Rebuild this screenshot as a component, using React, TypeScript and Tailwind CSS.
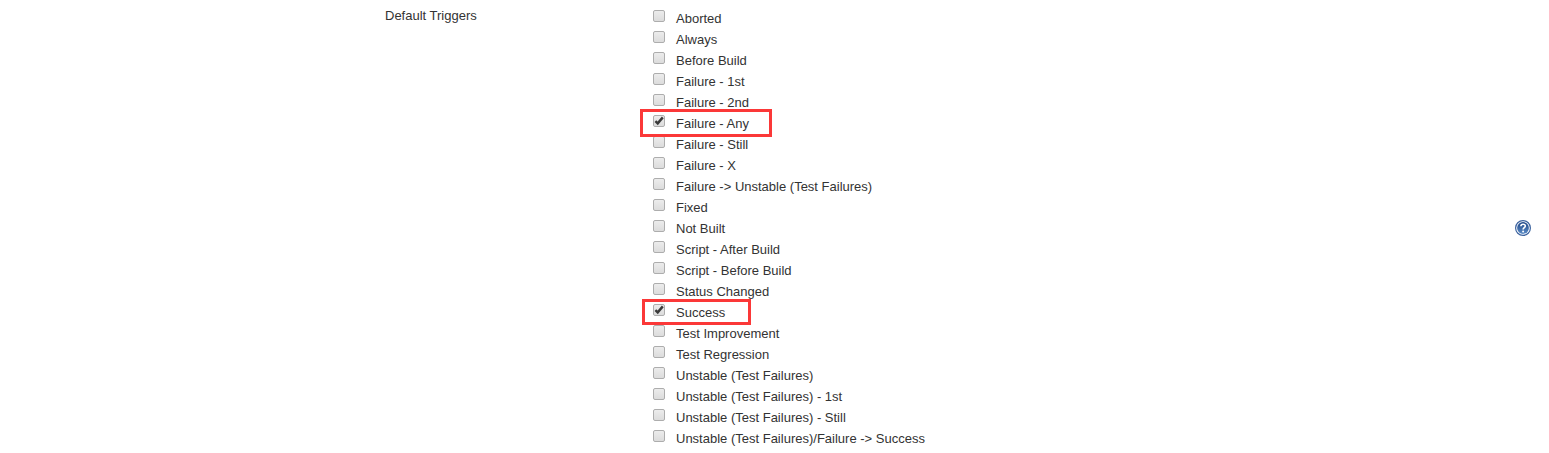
import React, { useState } from "react";

type Trigger = { name: string; checked?: boolean; highlight?: string };

const triggers: Trigger[] = [
  { name: "Aborted" },
  { name: "Always" },
  { name: "Before Build" },
  { name: "Failure - 1st" },
  { name: "Failure - 2nd" },
  { name: "Failure - Any", checked: true, highlight: "-left-[13px] -top-1 h-7 w-[132px]" },
  { name: "Failure - Still" },
  { name: "Failure - X" },
  { name: "Failure -> Unstable (Test Failures)" },
  { name: "Fixed" },
  { name: "Not Built" },
  { name: "Script - After Build" },
  { name: "Script - Before Build" },
  { name: "Status Changed" },
  { name: "Success", checked: true, highlight: "-left-[11px] -top-[3px] h-[26px] w-[109px]" },
  { name: "Test Improvement" },
  { name: "Test Regression" },
  { name: "Unstable (Test Failures)" },
  { name: "Unstable (Test Failures) - 1st" },
  { name: "Unstable (Test Failures) - Still" },
  { name: "Unstable (Test Failures)/Failure -> Success" },
];

function TriggerOption({ trigger }: { trigger: Trigger }) {
  const [checked, setChecked] = useState(Boolean(trigger.checked));
  return (
    <li className="relative flex h-[21px]">
      <label className="flex items-start gap-[11px]">
        <span className="mt-0.5 grid size-3">
          <input
            type="checkbox"
            checked={checked}
            onChange={(e) => setChecked(e.target.checked)}
            className="col-start-1 row-start-1 size-3 appearance-none rounded-xs border border-[#adadad] bg-linear-to-b from-[#ececec] to-[#dcdcdc]"
          />
          {checked && (
            <svg viewBox="0 0 12 12" className="pointer-events-none col-start-1 row-start-1 size-3" aria-hidden="true">
              <path d="M2.4 6.2 4.7 8.4 9.8 2.4" fill="none" stroke="#3a3a3a" strokeWidth="2.4" />
            </svg>
          )}
        </span>
        <span className="leading-[21px]">{trigger.name}</span>
      </label>
      {trigger.highlight && (
        <span className={"pointer-events-none absolute z-10 border-3 border-[#fb3838] " + trigger.highlight} />
      )}
    </li>
  );
}

function HelpIcon() {
  return (
    <svg viewBox="0 0 16 16" className="size-4" aria-hidden="true">
      <defs>
        <linearGradient id="help-fill" x1="0" y1="0" x2="0" y2="1">
          <stop offset="0" stopColor="#1f4788" />
          <stop offset="1" stopColor="#5b8cc6" />
        </linearGradient>
      </defs>
      <circle cx="8" cy="8" r="7.4" fill="#fff" stroke="#3c639f" strokeWidth="1.2" />
      <circle cx="8" cy="8" r="5.9" fill="url(#help-fill)" />
      <path d="M5.9 6.2C5.9 3.6 10.3 3.6 10.3 6.1 10.3 7.8 8.1 7.7 8.1 9.6" fill="none" stroke="#fff" strokeWidth="1.6" />
      <circle cx="8.1" cy="11.5" r="1" fill="#fff" />
    </svg>
  );
}

export default function App() {
  return (
    <main className="bg-white font-['Liberation_Sans',Arial,sans-serif] text-[13px] text-[#333333]">
      <fieldset aria-labelledby="triggers-title" className="flex pt-2 pr-[18px] pb-1 pl-[385px]">
        <div id="triggers-title" className="w-[268px] shrink-0 leading-4">
          Default Triggers
        </div>
        <ul className="flex-1">
          {triggers.map((t) => (
            <TriggerOption key={t.name} trigger={t} />
          ))}
        </ul>
        <button type="button" aria-label="Help for feature: Default Triggers" className="mb-0.5 size-4 self-center">
          <HelpIcon />
        </button>
      </fieldset>
    </main>
  );
}
